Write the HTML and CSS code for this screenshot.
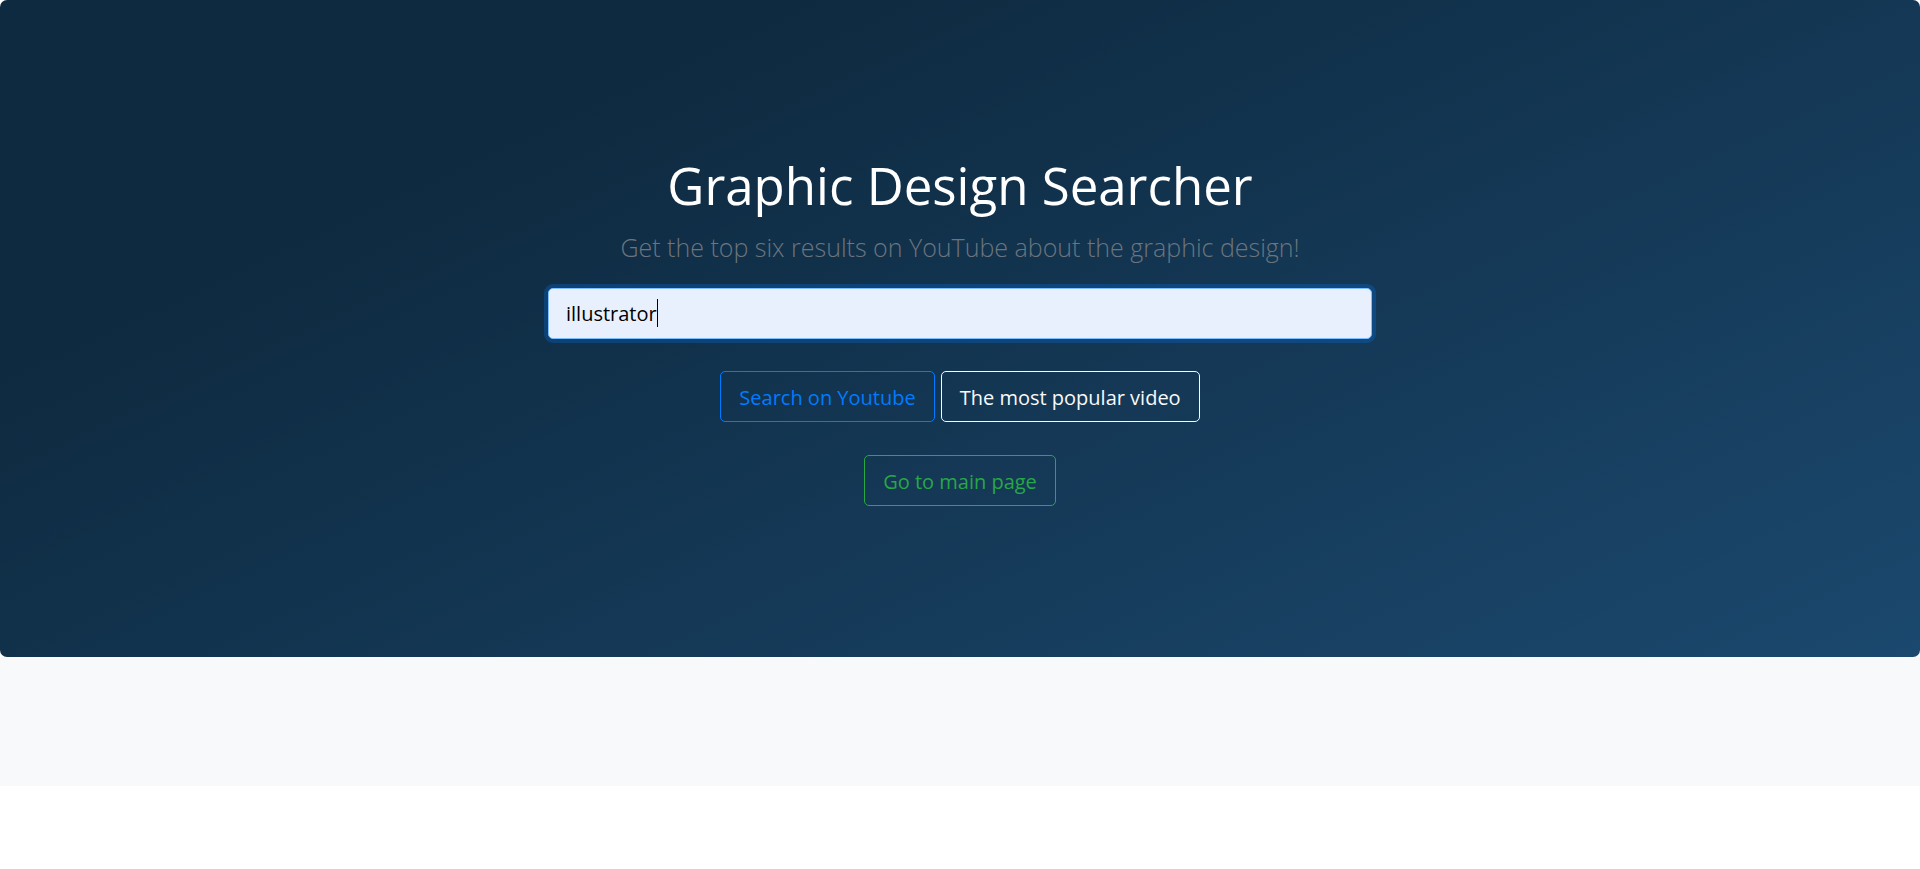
FILE: index.html
```html
<!DOCTYPE html>
<html lang="en">
<head>
<meta charset="utf-8">
<title>Graphic Design Searcher</title>
<link rel="stylesheet" href="styles.css">
</head>
<body>
<main>
<section class="hero">
<form class="search">
<h1 class="title">Graphic Design Searcher</h1>
<p class="lead"><label for="query">Get the top six results on YouTube about the graphic design!</label></p>
<div class="field">
<input class="query" id="query" type="text" value="illustrator" autocomplete="off">
<span class="caret-line" aria-hidden="true"><span class="typed">illustrator</span></span>
</div>
<div class="actions">
<button class="btn btn-primary" type="button">Search on Youtube</button>
<button class="btn btn-light" type="button">The most popular video</button>
</div>
<a class="btn btn-success" href="#">Go to main page</a>
</form>
</section>
<section class="results"></section>
</main>
</body>
</html>
```
FILE: styles.css
```css
*, *::before, *::after { box-sizing: border-box; }
body { margin: 0; background: #fff; font-family: "Open Sans", "Noto Sans", sans-serif; font-size: 16px; line-height: 1.5; }
.hero { display: flex; justify-content: center; padding: 151px 32px; border-radius: 7px; background: linear-gradient(155deg, #0e2a40 24%, #1b486e 100%); }
.search { display: flex; flex-direction: column; align-items: center; width: 100%; max-width: 824px; text-align: center; }
.title { margin: 0 0 8px; color: #fff; font-size: 51px; font-weight: 400; line-height: 68px; }
.lead { margin: 0 0 21px; color: #6c757d; font-size: 25px; font-weight: 300; line-height: 40px; }
.field { position: relative; width: 100%; margin-bottom: 32px; }
.query { display: block; width: 100%; height: 51px; padding: 8px 17px; border: 1px solid #80bdff; border-radius: 5px; outline: 0; background: #e8f0fe; box-shadow: 0 0 0 4px rgba(0, 123, 255, .25); color: #000; font: inherit; font-size: 20px; }
.caret-line { position: absolute; top: 11px; left: 18px; font-size: 20px; line-height: 28px; color: transparent; pointer-events: none; }
.typed { display: block; border-right: 1px solid #000; }
.actions { display: flex; flex-wrap: wrap; justify-content: center; gap: 6px; margin-bottom: 33px; }
.btn { display: inline-block; padding: 11px 18px 8px; border: 1px solid; border-radius: 5px; background: transparent; font: inherit; font-size: 20px; line-height: 30px; text-decoration: none; cursor: pointer; }
.btn-primary { color: #007bff; }
.btn-light { color: #f8f9fa; }
.btn-success { color: #28a745; }
.results { min-height: 129px; background: #f8f9fb; }
```
